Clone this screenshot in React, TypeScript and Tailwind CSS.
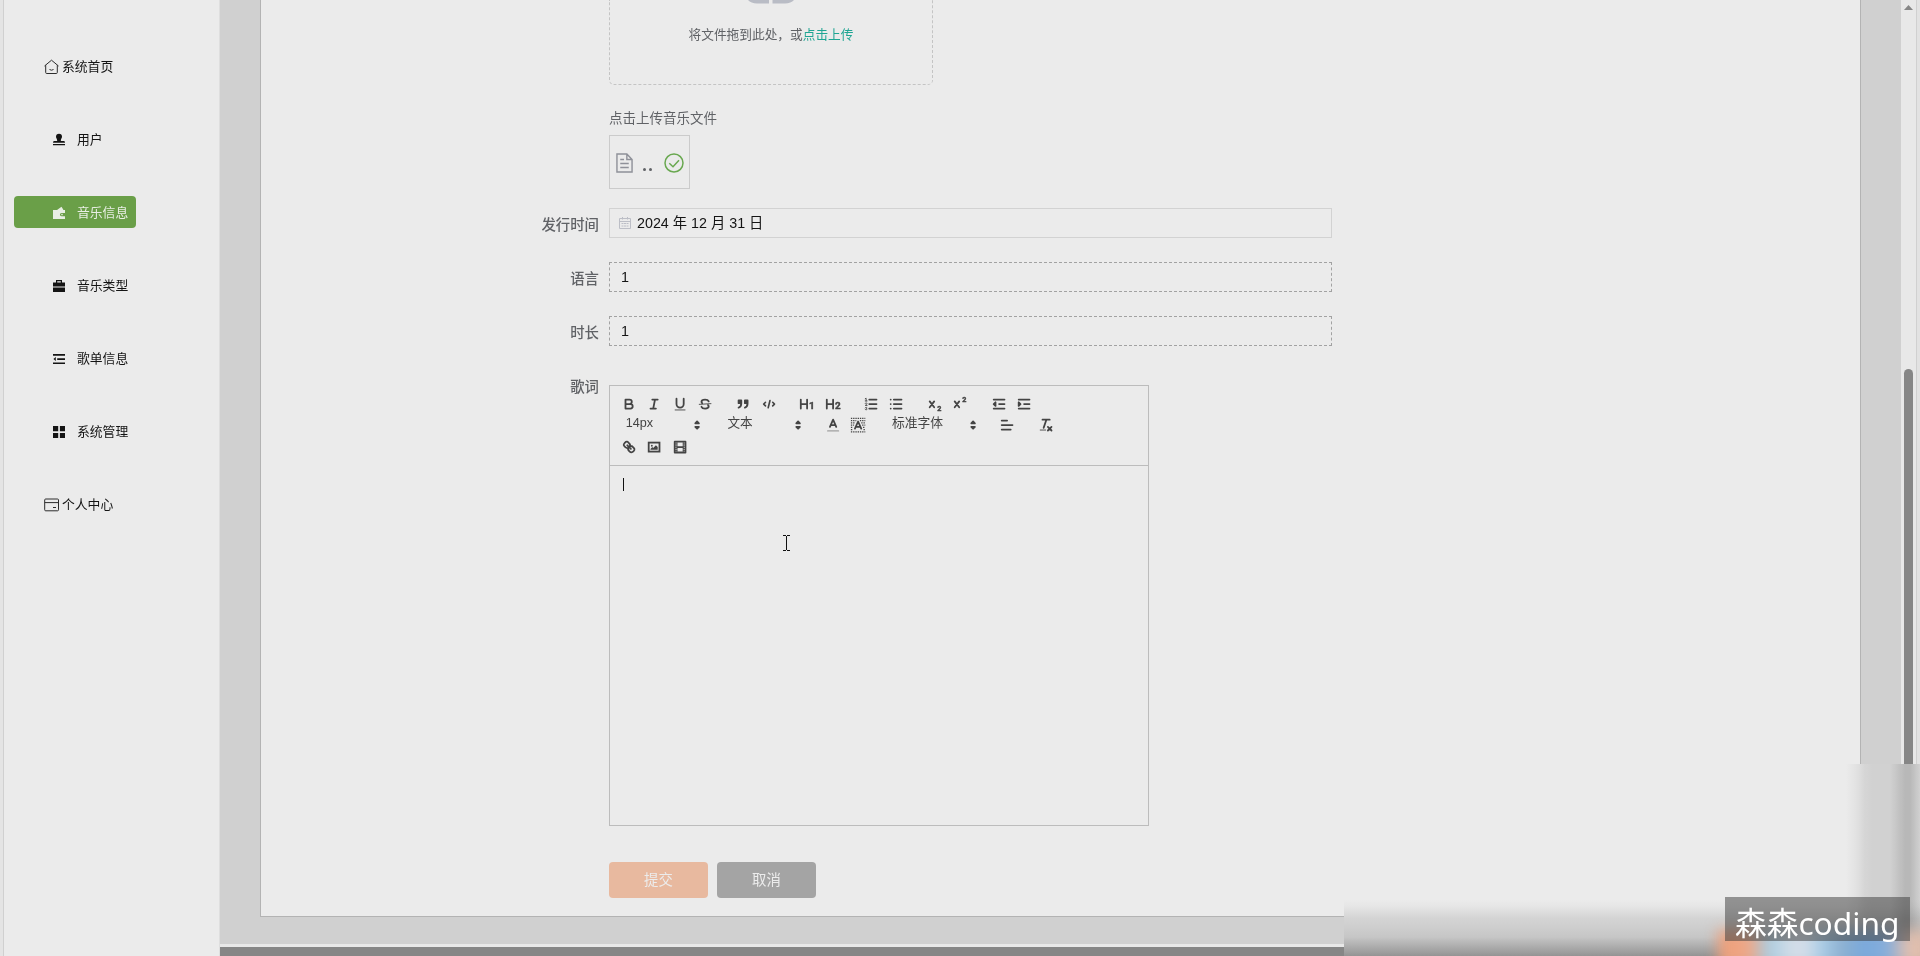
import React from "react";

const ui = "font-['Liberation_Sans','Noto_Sans_CJK_SC',sans-serif]";

type IconProps = { children: React.ReactNode };

/* ---------- sidebar ---------- */

function HomeIcon() {
  return (
    <svg width="16" height="16" viewBox="0 0 16 16" fill="none" stroke="#2c2c2c" strokeWidth="1">
      <path d="M1.700 6.200V13.500q0 1 1 1H12.300q1 0 1-1V6.200M.5 7 7.500 1.200 14.500 7M5.500 10.500q2 1.400 4 0" />
    </svg>
  );
}

function CardIcon() {
  return (
    <svg width="16" height="14" viewBox="0 0 16 14" fill="none" stroke="#2c2c2c" strokeWidth="1">
      <rect x="0.700" y="1" width="13.800" height="11.800" rx="1" />
      <path d="M.7 4.600h13.800M9 9.500h3" />
    </svg>
  );
}

function Glyph({ children }: IconProps) {
  return (
    <svg width="14" height="14" viewBox="0 0 14 14" fill="currentColor" className="shrink-0">
      {children}
    </svg>
  );
}

const subItems = [
  {
    label: "用户",
    active: false,
    icon: <path d="M7 .8a3 3 0 0 1 3 3c0 1.300-1.200 2-1.200 4.200H12q1 0 1 1.800H1Q1 8 2 8h3.200C5.200 5.800 4 5.100 4 3.800a3 3 0 0 1 3-3ZM1 10.900h12v1.400H1Z" />,
  },
  {
    label: "音乐信息",
    active: true,
    icon: (
      <>
        <path d="M1 4h4l4.500-3.200L11.500 4H13v3h-3.500a1.500 1.500 0 0 0 0 3.200H13V13H1Z" />
        <circle cx="10" cy="8.600" r="0.800" />
      </>
    ),
  },
  {
    label: "音乐类型",
    active: false,
    icon: <path d="M4 1h6v2.600h3v4H1v-4h3Zm1.200 1.200v1.400h3.600V2.200ZM1 8.600h12V13H1Z" fillRule="evenodd" />,
  },
  {
    label: "歌单信息",
    active: false,
    icon: <path d="M1 2h12v1.700H1ZM5.200 6.200H13v1.700H5.200ZM1 10.400h12v1.700H1ZM3.800 5v4L1.400 7Z" />,
  },
  {
    label: "系统管理",
    active: false,
    icon: <path d="M1 1h5.200v5.200H1ZM7.900 1H13v5.200H7.900ZM1 7.900h5.200V13H1ZM7.900 7.900H13V13H7.900Z" />,
  },
];

function Sidebar() {
  return (
    <aside className="w-[220px] shrink-0 border-r border-[#dedede] bg-[#ebebeb] flex">
      <div className="w-[3px] bg-[#e4e4e4]" />
      <div className="w-px bg-[#d0d0d0]" />
      <nav className="flex flex-col gap-[41px] pt-[50px] pl-[10px] text-[12.800px] text-[#141414]">
        <div className="flex h-8 items-center pt-px pl-[30px]">
          <HomeIcon />
          <span className="ml-[2px]">系统首页</span>
        </div>
        {subItems.map((item) => (
          <div
            key={item.label}
            className={
              item.active
                ? "flex h-8 w-[122px] items-center rounded bg-[#6a9f48] pt-px pl-[38px] text-[#e8eee4]"
                : "flex h-8 w-[122px] items-center pt-px pl-[38px]"
            }
          >
            <Glyph>{item.icon}</Glyph>
            <span className="ml-[11px] whitespace-nowrap">{item.label}</span>
          </div>
        ))}
        <div className="flex h-8 items-center pt-px pl-[30px]">
          <CardIcon />
          <span className="ml-[2px]">个人中心</span>
        </div>
      </nav>
    </aside>
  );
}

/* ---------- rich text toolbar ---------- */

function Tool({ children }: IconProps) {
  return (
    <span className="flex h-[21.600px] w-[25.200px] items-center justify-center">
      <svg
        width="16.200"
        height="16.200"
        viewBox="0 0 18 18"
        fill="none"
        stroke="#444"
        strokeWidth="2"
        strokeLinecap="round"
        strokeLinejoin="round"
      >
        {children}
      </svg>
    </span>
  );
}

function Group({ children }: IconProps) {
  return <div className="mr-[13.500px] flex">{children}</div>;
}

function Picker({ label, wide }: { label: string; wide?: boolean }) {
  return (
    <div
      className={
        wide
          ? "flex h-[21.600px] w-[97.200px] items-center justify-between pl-2 text-[12.800px] text-[#444]"
          : "flex h-[21.600px] w-[88.200px] items-center justify-between pl-[9px] text-[12.600px] text-[#444]"
      }
    >
      <span className="pb-[4px] leading-none">{label}</span>
      <svg width="16.200" height="16.200" viewBox="0 0 18 18" fill="#444" stroke="#444" strokeWidth="2" strokeLinejoin="round">
        <path d="M7 11l2 2 2-2ZM7 7l2-2 2 2Z" />
      </svg>
    </div>
  );
}

function SvgText({ x, y, size, children }: { x: number; y: number; size: number; children: string }) {
  return (
    <text x={x} y={y} fontSize={size} fontWeight="700" fill="#444" stroke="#444" strokeWidth="0.500" fontFamily="Roboto, sans-serif">
      {children}
    </text>
  );
}

function Toolbar() {
  return (
    <div className="h-[80px] border-b border-[#bcbcbc] pt-[7px] pl-[6.700px]">
      <div className="flex">
        <Group>
          <Tool>
            <path d="M5 4h4.500a2.500 2.500 0 0 1 0 5H5ZM5 9h5.500a2.500 2.500 0 0 1 0 5H5Z" />
          </Tool>
          <Tool>
            <path d="M7 4h6M5 14h6M8 14l2-10" />
          </Tool>
          <Tool>
            <path d="M5 3v6a4 4 0 0 0 8 0V3" />
            <path d="M3.500 15.500h11" strokeWidth="1" />
          </Tool>
          <Tool>
            <path d="M13 6C12.500 4.800 11 4 9 4 6.800 4 5 5 5 6.500q0 1 .8 1.500M5 12c.5 1.200 2 2 4 2 2.200 0 4-1 4-2.500q0-1-.8-1.500" />
            <path d="M2.500 9.300l13-.8" strokeWidth="1" />
          </Tool>
        </Group>
        <Group>
          <Tool>
            <path d="M4 5h3v3H4ZM11 5h3v3h-3ZM7 8c0 4-3 5-3 5M14 8c0 4-3 5-3 5" fill="#444" />
          </Tool>
          <Tool>
            <path d="M5 7 3 9l2 2M13 7l2 2-2 2M10 5 8 13" strokeWidth="1.800" />
          </Tool>
        </Group>
        <Group>
          <Tool>
            <path d="M2 4v10M9 4v10M2 9h7" />
            <SvgText x={11} y={15} size={11}>1</SvgText>
          </Tool>
          <Tool>
            <path d="M2 4v10M9 4v10M2 9h7" />
            <SvgText x={11} y={15} size={11}>2</SvgText>
          </Tool>
        </Group>
        <Group>
          <Tool>
            <path d="M7 4h8M7 9h8M7 14h8" />
            <path d="M2.500 5.500h2M3.500 5.500v-3l-1 .5M4.500 10.500h-2c0-.2 1.900-1 1.900-2.200a1 1 0 0 0-1.900-.1M2.500 14.800a1 1 0 0 0 1.900-.1.700.7 0 0 0-.6-.7.700.7 0 0 0 .6-.7 1 1 0 0 0-1.900-.1" strokeWidth="1" />
          </Tool>
          <Tool>
            <path d="M6.500 4H15M6.500 9H15M6.500 14H15M3 4h0M3 9h0M3 14h0" />
          </Tool>
        </Group>
        <Group>
          <Tool>
            <path d="M3 6l5 6.500M8 6l-5 6.500" />
            <SvgText x={11.500} y={16.500} size={8}>2</SvgText>
          </Tool>
          <Tool>
            <path d="M3 6l5 6.500M8 6l-5 6.500" />
            <SvgText x={11.500} y={7} size={8}>2</SvgText>
          </Tool>
        </Group>
        <Group>
          <Tool>
            <path d="M3 4h12M3 14h12M9 9h6" />
            <path d="M5 7v4L3 9Z" fill="#444" />
          </Tool>
          <Tool>
            <path d="M3 4h12M3 14h12M9 9h6" />
            <path d="M3 7v4l2-2Z" fill="#444" />
          </Tool>
        </Group>
      </div>
      <div className="flex">
        <Group>
          <Picker label="14px" />
        </Group>
        <Group>
          <Picker label="文本" />
        </Group>
        <Group>
          <Tool>
            <path d="M5.500 11 9 3l3.500 8M6.400 9h5.200" />
            <path d="M3 15.500h12" strokeWidth="1.500" opacity="0.450" />
          </Tool>
          <Tool>
            <path d="M1 1.500h16M1 4h6M11 4h6M1 6.500h4.500M12.500 6.500h4.500M1 9h3.500M13.500 9h3.500M1 11.500h2.500M14.500 11.500h2.500M1 14h2M15 14h2M1 16.500h16" strokeWidth="1.500" strokeDasharray="1.500 1" strokeLinecap="butt" />
            <path d="M5.500 13 9 5l3.500 8M6.400 11h5.200" />
          </Tool>
        </Group>
        <Group>
          <Picker label="标准字体" wide />
        </Group>
        <Group>
          <Tool>
            <path d="M3 4h6M3 9h12M3 14h10" />
          </Tool>
        </Group>
        <Group>
          <Tool>
            <path d="M5 3h8M6.300 12l3-9M11 11l4 4M15 11l-4 4" />
            <path d="M2.500 14.500h6" strokeWidth="1" />
          </Tool>
        </Group>
      </div>
      <div className="flex">
        <Group>
          <Tool>
            <path d="M7 7l4 4M8.900 4.600a3.500 3.500 0 0 1 .4 4.700 3.500 3.500 0 0 1-4.700-.4C3.200 7.500 2 6.400 4.200 4.200s3.300-1 4.700.4ZM13.400 9.100a3.500 3.500 0 0 0-4.700-.4 3.500 3.500 0 0 0 .4 4.700c1.400 1.400 2.500 2.500 4.700.4s1-3.300-.4-4.700Z" />
          </Tool>
          <Tool>
            <rect x="3" y="4" width="12" height="10" strokeLinejoin="miter" />
            <circle cx="6.500" cy="7.500" r="1" fill="#444" stroke="none" />
            <path d="M5 12v-1l2-2 1 1 3-3 2 2v3Z" fill="#444" stroke="none" />
          </Tool>
          <Tool>
            <rect x="3" y="3" width="12" height="12" />
            <path d="M5.500 3v12M12.500 3v12M3 5.500h2.500M3 8h2.500M3 10.500h2.500M3 12.700h2.500M12.500 5.500H15M12.500 8H15M12.500 10.500H15M12.500 12.700H15" strokeWidth="1" />
            <path d="M6 9h6" />
          </Tool>
        </Group>
      </div>
    </div>
  );
}

/* ---------- form ---------- */

function Row({ label, children }: { label: string; children: React.ReactNode }) {
  return (
    <div className="grid grid-cols-[338px_1fr] gap-x-[10px]">
      <div className="h-[30px] text-right text-[14.400px] leading-[35px] font-medium text-[#606266]">{label}</div>
      <div>{children}</div>
    </div>
  );
}

function FileTile() {
  return (
    <div className="flex h-[54px] w-[81px] items-center border border-[#cbcbcb] pl-[6px] text-[#606266]">
      <svg width="17" height="20" viewBox="0 0 18 20" fill="none" stroke="#8f9199" strokeWidth="1.500" preserveAspectRatio="none" className="mt-px">
        <path d="M1 1h10.500L17 6.500V19H1ZM11.500 1v5.500H17M4.500 6.500h4M4.500 10.500h9M4.500 14.500h9" />
      </svg>
      <span className="mt-[8px] ml-[10px] flex w-[13px] gap-[3px] pt-[7px]">
        <i className="h-[3px] w-[3px] rounded-full bg-[#606266]" />
        <i className="h-[3px] w-[3px] rounded-full bg-[#606266]" />
      </span>
      <svg width="20" height="20" viewBox="0 0 20 20" fill="none" stroke="#69a850" strokeWidth="1.500" className="mt-px ml-[8px]">
        <circle cx="10" cy="10" r="9" />
        <path d="M5.300 10.200 9 13.700l6-6.500" />
      </svg>
    </div>
  );
}

function Form() {
  return (
    <div>
      <div className="grid grid-cols-[338px_1fr] gap-x-[10px]">
        <div />
        <div>
          <div className="flex h-[85px] w-[324px] flex-col items-center rounded-b-[5px] border border-t-0 border-dashed border-[#c4c4c4]">
            <svg width="46" height="4" viewBox="0 0 46 4" fill="#b9bcc5">
              <path d="M0 0h21v3.400H9Q3 3.400 0 0ZM24.500 0H46q-3 3.400-9 3.400H24.500Z" />
            </svg>
            <div className="mt-[21px] text-[12.700px] leading-5 text-[#606266]">
              将文件拖到此处，或<span className="text-[#1fa593]">点击上传</span>
            </div>
          </div>
          <div className="mt-6 mb-[6px] text-[13.500px] leading-5 text-[#606266]">点击上传音乐文件</div>
          <FileTile />
        </div>
      </div>
      <div className="mt-[19px] flex flex-col gap-6">
        <Row label="发行时间">
          <div className="flex h-[30px] w-[723px] items-center border border-[#d2d2d2] pl-[9px] text-[14.300px] text-[#141414]">
            <svg width="12" height="12" viewBox="0 0 12 12" fill="none" stroke="#bcbec6" strokeWidth="1">
              <path d="M.5 1.500h11v10H.5ZM.5 4.500h11M3.500 0v2.500M8.500 0v2.500M2.500 6.500h2M5 6.500h2M7.500 6.500h2M2.500 9h2M5 9h2M7.500 9h2" />
            </svg>
            <span className="ml-[6px] leading-none">2024 年 12 月 31 日</span>
          </div>
        </Row>
        <Row label="语言">
          <div className="flex h-[30px] w-[723px] items-center border border-dashed border-[#a2a2a2] pt-[2px] pl-[11px] text-[14.400px] text-[#141414]">1</div>
        </Row>
        <Row label="时长">
          <div className="flex h-[30px] w-[723px] items-center border border-dashed border-[#a2a2a2] pt-[2px] pl-[11px] text-[14.400px] text-[#141414]">1</div>
        </Row>
        <Row label="歌词">
          <div className="mt-[15px] h-[441px] w-[540px] border border-[#bcbcbc]">
            <Toolbar />
            <div className="pt-[12px] pl-[13px]">
              <div className="h-[13px] w-px bg-[#111]" />
              <svg width="7" height="16" viewBox="0 0 7 16" stroke="#111" fill="none" className="mt-[44px] ml-[160px]">
                <path d="M0 .5h3M4 .5h3M0 15.500h3M4 15.500h3M3.500 1v14" />
              </svg>
            </div>
          </div>
          <div className="mt-9 flex gap-[9px] text-[14.400px] text-[#ececec]">
            <button className="h-9 w-[99px] rounded-[4px] bg-[#e8b99f] pt-[2px]">提交</button>
            <button className="h-9 w-[99px] rounded-[4px] bg-[#a4a4a4] pt-[2px]">取消</button>
          </div>
        </Row>
      </div>
    </div>
  );
}

/* ---------- watermark corner ---------- */

function Watermark() {
  return (
    <div className="absolute top-[764px] right-0 h-[192px] w-[576px] overflow-hidden bg-[linear-gradient(to_bottom,#ebebeb_0_136px,#e6e6e6_142px,#d4d4d4_154px,#cfcfcf_162px,#c6c6c6_173px,#a9a9a9_184px,#949494_192px)]">
      <div className="absolute top-0 right-0 h-full w-[74px] bg-[linear-gradient(to_right,#ffffff_0,#f6f6f6_10px,#e8e8e8_19px,#e3e3e3_26px,#e3e3e3_44px,#c8c8c8_59px,#c8c8c8_64px,#e3e3e3_74px)] mix-blend-multiply" />
      <div className="absolute right-[-10px] bottom-[-12px] h-[38px] w-[212px] bg-[linear-gradient(to_right,#ee9e78_0,#eea888_32px,#a9cce0_50px,#d3dde8_74px,#d3dde8_88px,#a8cce6_104px,#8db0d0_124px,#79a9dc_146px,#86aedb_170px,#e2bfae_190px,#e2bfae_212px)] blur-[7px]" />
      <div className="absolute top-[133px] right-[10px] flex h-11 w-[185px] items-center bg-[#383838]/50 pl-[10px] font-['Noto_Sans','Noto_Sans_CJK_SC',sans-serif] text-[31.700px] leading-none whitespace-nowrap text-white">
        <span className="pt-[8px]">森森coding</span>
      </div>
    </div>
  );
}

export default function App() {
  return (
    <div className={`${ui} relative flex h-[956px] w-[1920px] overflow-hidden bg-[#e2e2e2]`}>
      <Sidebar />
      <main className="flex w-[1681px] flex-col bg-[#d0d0d0]">
        <section className="ml-10 h-[917px] w-[1601px] border border-t-0 border-[#b3b3b3] bg-[#ebebeb]">
          <Form />
        </section>
        <div className="mt-[27px] h-[3px] bg-[#e8e8e8]" />
        <div className="h-[9px] bg-[#868686]" />
      </main>
      <div className="flex w-[16px] flex-col items-center border-r border-[#d0d0d0] bg-[#e8e8e8]">
        <svg width="9" height="5" viewBox="0 0 9 5" fill="#868686" className="mt-[5px] shrink-0">
          <path d="M4.500 0 9 5H0Z" />
        </svg>
        <div className="mt-[359px] w-[9px] grow rounded-t-full bg-[#868686]" />
      </div>
      <Watermark />
    </div>
  );
}
